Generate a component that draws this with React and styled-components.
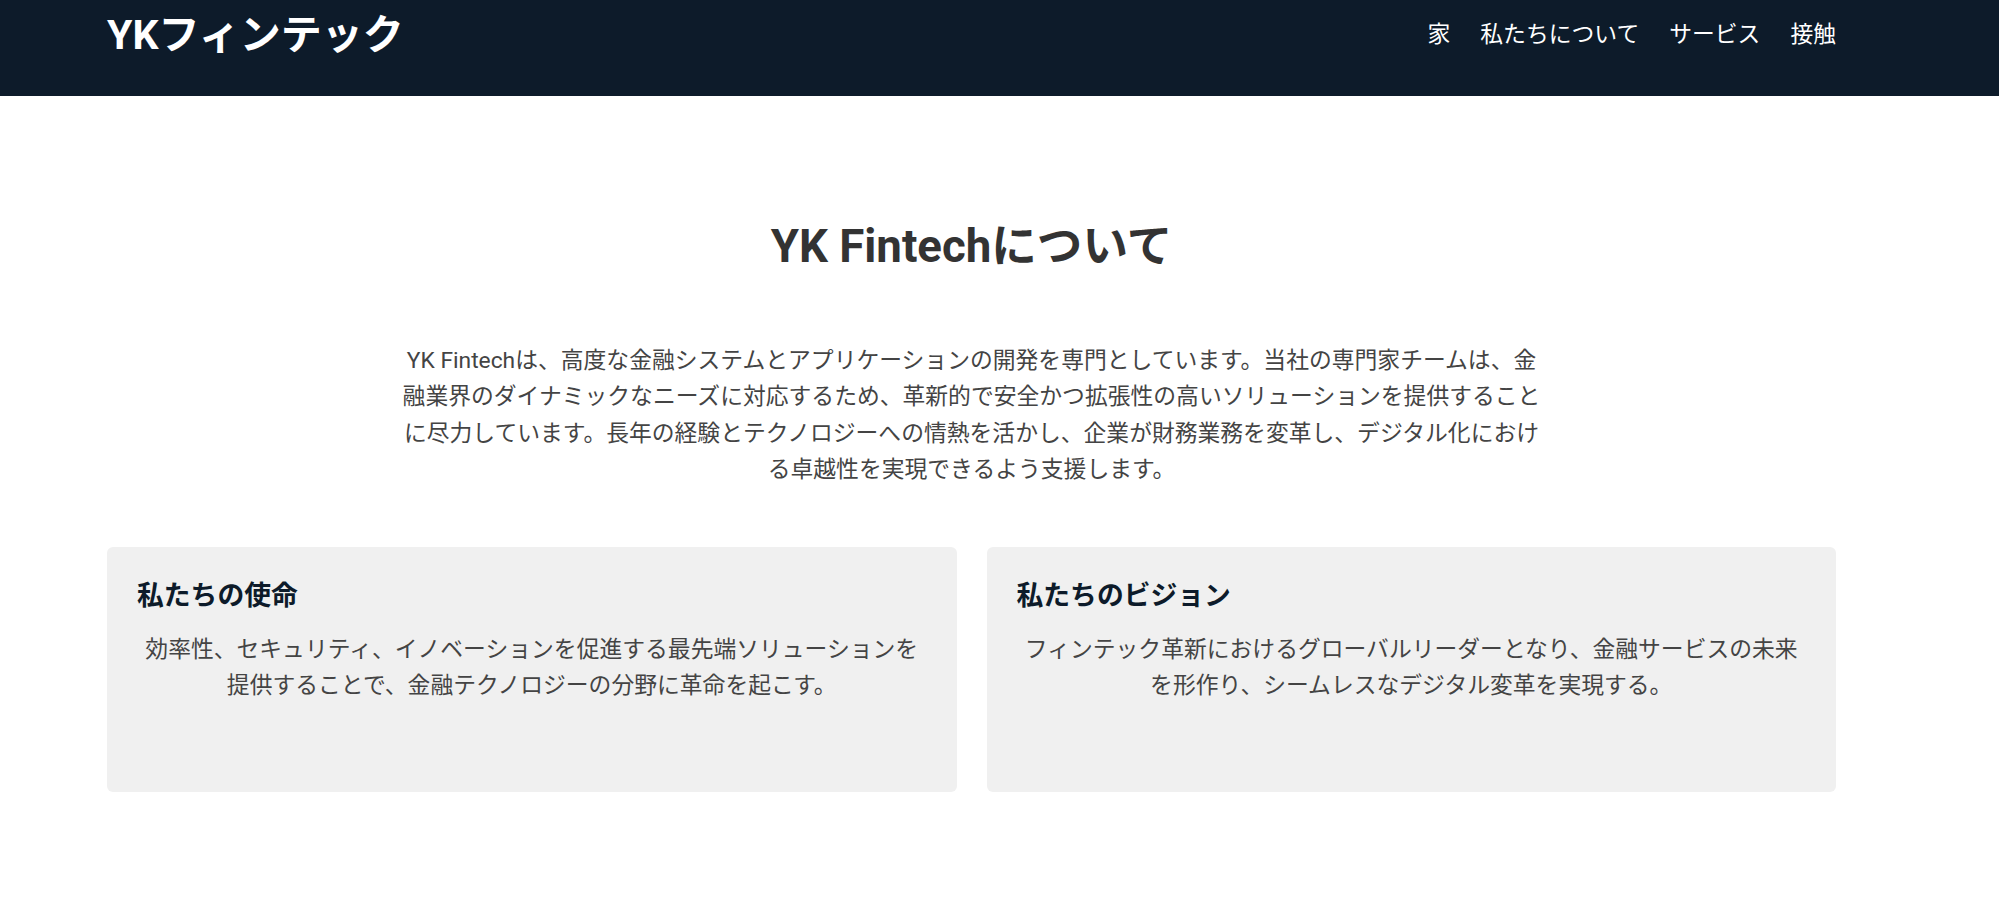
import React from 'react';
import styled, { createGlobalStyle } from 'styled-components';

const GlobalStyle = createGlobalStyle`
  * {
    box-sizing: border-box;
  }
  body {
    margin: 0;
    background: #ffffff;
    font-family: Roboto, "Noto Sans CJK JP", sans-serif;
    color: #444444;
  }
`;

const Header = styled.header`
  height: 96px;
  background: #0d1b2a;
  padding: 15px 163px 0 107px;
`;

const HeaderRow = styled.div`
  display: flex;
  align-items: center;
  justify-content: space-between;
  height: 41px;
`;

const Logo = styled.div`
  color: #ffffff;
  font-size: 41px;
  font-weight: 700;
  line-height: 1;
`;

const Nav = styled.nav`
  display: flex;
  gap: 30px;
`;

const NavLink = styled.a`
  color: #ffffff;
  font-size: 22.8px;
  line-height: 1;
  text-decoration: none;
  cursor: pointer;
`;

const Main = styled.main`
  padding: 124px 163px 0 107px;
`;

const Title = styled.h2`
  margin: 0;
  text-align: center;
  color: #333333;
  font-size: 45.6px;
  font-weight: 700;
  line-height: 1.2;
`;

const Intro = styled.p`
  max-width: 1150px;
  margin: 68px auto 0;
  text-align: center;
  font-size: 22.8px;
  line-height: 36.5px;
  color: #444444;
`;

const CardGrid = styled.div`
  display: grid;
  grid-template-columns: 1fr 1fr;
  gap: 30px;
  margin-top: 58px;
`;

const Card = styled.section`
  min-height: 245px;
  background: #f0f0f0;
  border-radius: 6px;
  padding: 33px 30px 30px;
`;

const CardTitle = styled.h3`
  margin: 0;
  color: #0d1b2a;
  font-size: 26.8px;
  font-weight: 700;
  line-height: 1.2;
`;

const CardText = styled.p`
  margin: 20px 0 0;
  text-align: center;
  font-size: 22.8px;
  line-height: 36.5px;
  color: #444444;
`;

const navItems = ['家', '私たちについて', 'サービス', '接触'];

const cards = [
  {
    id: 'mission',
    title: '私たちの使命',
    text: '効率性、セキュリティ、イノベーションを促進する最先端ソリューションを提供することで、金融テクノロジーの分野に革命を起こす。'
  },
  {
    id: 'vision',
    title: '私たちのビジョン',
    text: 'フィンテック革新におけるグローバルリーダーとなり、金融サービスの未来を形作り、シームレスなデジタル変革を実現する。'
  }
];

const App = () => (
  <>
    <GlobalStyle />
    <Header>
      <HeaderRow>
        <Logo>YKフィンテック</Logo>
        <Nav>
          {navItems.map(item => (
            <NavLink key={item}>{item}</NavLink>
          ))}
        </Nav>
      </HeaderRow>
    </Header>
    <Main>
      <Title>YK Fintechについて</Title>
      <Intro>
        YK Fintechは、高度な金融システムとアプリケーションの開発を専門としています。当社の専門家チームは、金融業界のダイナミックなニーズに対応するため、革新的で安全かつ拡張性の高いソリューションを提供することに尽力しています。長年の経験とテクノロジーへの情熱を活かし、企業が財務業務を変革し、デジタル化における卓越性を実現できるよう支援します。
      </Intro>
      <CardGrid>
        {cards.map(card => (
          <Card key={card.id}>
            <CardTitle>{card.title}</CardTitle>
            <CardText>{card.text}</CardText>
          </Card>
        ))}
      </CardGrid>
    </Main>
  </>
);

export default App;
